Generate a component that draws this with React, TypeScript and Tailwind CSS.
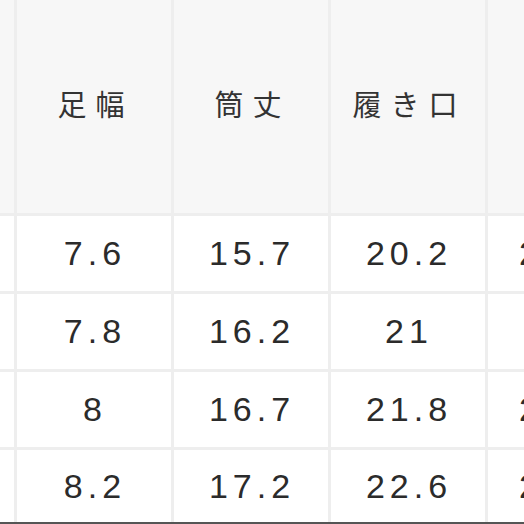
const headers = ["", "足幅", "筒丈", "履き口", "重量"];

const rows = [
  ["", "7.6", "15.7", "20.2", "23.4"],
  ["", "7.8", "16.2", "21", "24"],
  ["", "8", "16.7", "21.8", "24.6"],
  ["", "8.2", "17.2", "22.6", "25.4"],
];

export default function App() {
  return (
    <div className="w-[524px] h-[524px] overflow-hidden bg-white">
      <div className="grid grid-cols-[14px_154px_154px_154px_146px] grid-rows-[213px_75px_75px_75px_72px] gap-[3px] bg-[#eeeeee] w-max">
        {headers.map((h, i) => (
          <div
            key={"h" + i}
            className="bg-[#f7f7f7] flex items-center justify-center pb-[5px] text-[29px] tracking-[9px] text-[#333333] font-['Noto_Sans_CJK_JP',sans-serif] whitespace-nowrap"
          >
            <span className="mr-[-3px]">{h}</span>
          </div>
        ))}
        {rows.map((r, ri) =>
          r.map((c, ci) => (
            <div
              key={ri + "-" + ci}
              className="bg-white flex items-center justify-center text-[34px] tracking-[5px] text-[#2b2b2b] font-['Liberation_Sans',Arial,sans-serif] whitespace-nowrap"
            >
              <span className="mr-[-2px]">{c}</span>
            </div>
          ))
        )}
      </div>
      <div className="h-[2px] bg-[#555555]" />
    </div>
  );
}
